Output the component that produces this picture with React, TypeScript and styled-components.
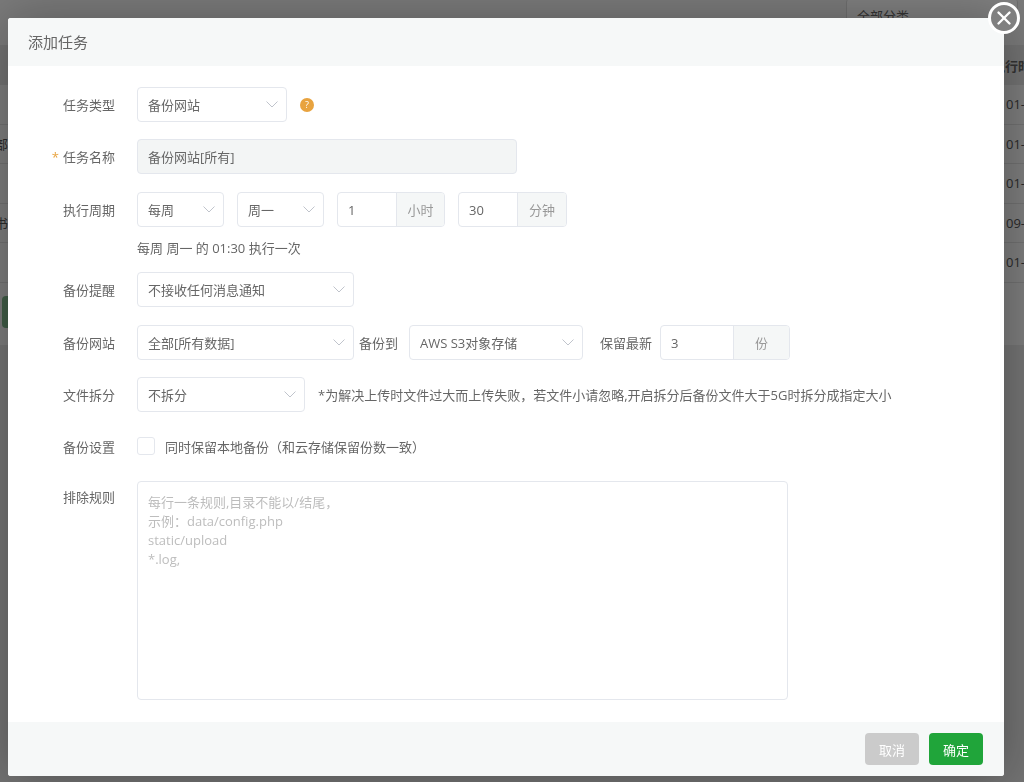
import React from "react";
import styled, { createGlobalStyle } from "styled-components";
import { X } from "lucide-react";

const Global = createGlobalStyle`
  html, body { margin: 0; padding: 0; height: 100%; overflow: hidden; }
  body { font-family: "Open Sans", "Noto Sans CJK SC", "Liberation Sans", sans-serif; font-size: 13px; color: #666; }
  * { box-sizing: border-box; }
`;

const Page = styled.div`
  width: 1024px;
  height: 782px;
  background: #e6e6e6;
  overflow: hidden;
`;
const PageTop = styled.div`
  height: 45px;
  display: flex;
  justify-content: flex-end;
  padding: 0 6px 0 0;
  background: #f5f5f5;
`;
const CategorySelect = styled.div`
  width: 172px;
  height: 32px;
  margin-top: -2px;
  padding: 7px 10px;
  border: 1px solid #ddd;
  border-radius: 4px;
  background: #fff;
`;
const PageTable = styled.div`
  background: #f8f8f8;
  height: 300px;
`;
const TableHead = styled.div`
  height: 40px;
  background: #e4e4e4;
  display: flex;
  justify-content: flex-end;
  align-items: center;
  font-weight: 600;
`;
const TableRow = styled.div`
  height: 39.5px;
  display: flex;
  justify-content: space-between;
  align-items: center;
  border-bottom: 1px solid #e0e0e0;
`;
const EdgeText = styled.span`
  display: block;
  width: 18px;
  overflow: hidden;
  white-space: nowrap;
  color: #555;
`;
const HeadText = styled(EdgeText)`
  width: 32px;
  color: #666;
`;
const LeftEdge = styled(EdgeText)`
  direction: rtl;
  width: 8px;
`;
const GreenButton = styled.div`
  width: 8px;
  height: 32px;
  margin: 13.5px 0 0 2px;
  background: #7fb88c;
  border-radius: 4px 0 0 4px;
`;

const Overlay = styled.div`
  position: fixed;
  inset: 0;
  background: rgba(0, 0, 0, 0.5);
`;
const Modal = styled.div`
  position: fixed;
  left: 8px;
  top: 18px;
  width: 996px;
  height: 758px;
  background: #fff;
  border-radius: 3px;
  box-shadow: 1px 1px 50px rgba(0, 0, 0, 0.3);
  display: flex;
  flex-direction: column;
`;
const Header = styled.div`
  height: 48px;
  flex: none;
  padding: 0 0 2px 20px;
  display: flex;
  align-items: center;
  font-size: 15px;
  color: #666;
  background: #f6f8f8;
  border-radius: 3px 3px 0 0;
`;
const CloseButton = styled.button`
  position: absolute;
  right: -16px;
  top: -16px;
  width: 32px;
  height: 32px;
  padding: 0;
  border: 3px solid #fff;
  border-radius: 50%;
  background: #808080;
  color: #fff;
  display: flex;
  align-items: center;
  justify-content: center;
`;
const Body = styled.div`
  flex: 1;
  padding: 21px 0 0;
`;
const Row = styled.div<{ $after?: number }>`
  display: flex;
  align-items: center;
  min-height: 35px;
  margin-bottom: ${(p) => p.$after ?? 17.5}px;
`;
const Label = styled.div<{ $required?: boolean }>`
  width: 107px;
  flex: none;
  text-align: right;
  margin-right: 22px;
  position: relative;
  &::before {
    content: ${(p) => (p.$required ? '"*"' : "none")};
    color: #e8a33f;
    margin-right: 4px;
  }
`;
const SelectBox = styled.div<{ $w: number }>`
  width: ${(p) => p.$w}px;
  height: 35px;
  flex: none;
  border: 1px solid #e4e7ed;
  border-radius: 4px;
  padding: 0 10px;
  display: flex;
  align-items: center;
  justify-content: space-between;
  color: #666;
`;
const Chevron = styled.svg`
  width: 12px;
  height: 7px;
  margin-right: -2px;
  flex: none;
  fill: none;
  stroke: #c0c4cc;
  stroke-width: 1;
`;
const NameInput = styled.div`
  width: 380px;
  height: 35px;
  border: 1px solid #e4e7ed;
  border-radius: 4px;
  padding: 0 10px;
  background: #f3f5f5;
  display: flex;
  align-items: center;
`;
const InputGroup = styled.div<{ $w: number; $addon: number }>`
  width: ${(p) => p.$w}px;
  height: 35px;
  flex: none;
  display: grid;
  grid-template-columns: 1fr ${(p) => p.$addon}px;
  border: 1px solid #e4e7ed;
  border-radius: 4px;
  overflow: hidden;
`;
const InputValue = styled.div`
  padding: 0 10px;
  display: flex;
  align-items: center;
`;
const Addon = styled.div`
  background: #f5f7f7;
  border-left: 1px solid #e4e7ed;
  color: #999;
  display: flex;
  align-items: center;
  justify-content: center;
`;
const HelpIcon = styled.span`
  width: 14px;
  height: 14px;
  margin-left: 13px;
  border-radius: 50%;
  background: #e8a33f;
  color: #fff;
  font-size: 9px;
  line-height: 14px;
  text-align: center;
`;
const Inline = styled.span<{ $l: number; $r: number }>`
  margin-left: ${(p) => p.$l}px;
  margin-right: ${(p) => p.$r}px;
  white-space: nowrap;
  flex: none;
`;
const Hint = styled.div`
  margin: -7px 0 14.5px 129px;
  height: 20px;
  line-height: 20px;
  color: #666;
`;
const CheckBox = styled.span`
  width: 18px;
  height: 18px;
  border: 1px solid #e4e7ed;
  border-radius: 3px;
  margin-right: 10px;
  flex: none;
`;
const TextAreaRow = styled(Row)`
  align-items: flex-start;
  margin: 0;
`;
const TextLabel = styled(Label)`
  padding-top: 6px;
`;
const TextArea = styled.div`
  width: 651px;
  height: 219px;
  border: 1px solid #e4e7ed;
  border-radius: 4px;
  padding: 10.5px 10px;
  line-height: 19.3px;
  color: #bdbdbd;
  white-space: pre-line;
`;
const Footer = styled.div`
  height: 54px;
  flex: none;
  background: #f6f8f8;
  border-radius: 0 0 3px 3px;
  display: flex;
  justify-content: flex-end;
  align-items: center;
  gap: 10px;
  padding-right: 21px;
`;
const Button = styled.button<{ $primary?: boolean }>`
  width: 54px;
  height: 32px;
  padding: 0;
  border: 0;
  border-radius: 4px;
  color: #fff;
  font: inherit;
  background: ${(p) => (p.$primary ? "#20a53a" : "#cbcbcb")};
`;

const Select = ({ w, children }: { w: number; children: React.ReactNode }) => (
  <SelectBox $w={w}>
    <span>{children}</span>
    <Chevron viewBox="0 0 12 7">
      <polyline points="0.5,0.5 6,6 11.5,0.5" />
    </Chevron>
  </SelectBox>
);

const Group = ({ w, addon, value, unit }: { w: number; addon: number; value: string; unit: string }) => (
  <InputGroup $w={w} $addon={addon}>
    <InputValue>{value}</InputValue>
    <Addon>{unit}</Addon>
  </InputGroup>
);

const rows: [string, string][] = [["", "01-"], ["部", "01-"], ["", "01-"], ["书", "09-"], ["", "01-"]];

export default function App() {
  return (
    <>
      <Global />
      <Page>
        <PageTop>
          <CategorySelect>全部分类</CategorySelect>
        </PageTop>
        <PageTable>
          <TableHead>
            <HeadText>执行时间</HeadText>
          </TableHead>
          {rows.map(([l, r], i) => (
            <TableRow key={i}>
              <LeftEdge>{l}</LeftEdge>
              <EdgeText>{r}</EdgeText>
            </TableRow>
          ))}
          <GreenButton />
        </PageTable>
      </Page>
      <Overlay />
      <Modal>
        <Header>添加任务</Header>
        <CloseButton aria-label="关闭">
          <X size={22} strokeWidth={2.6} />
        </CloseButton>
        <Body>
          <Row $after={17}>
            <Label>任务类型</Label>
            <Select w={150}>备份网站</Select>
            <HelpIcon>?</HelpIcon>
          </Row>
          <Row $after={18}>
            <Label $required>任务名称</Label>
            <NameInput>备份网站[所有]</NameInput>
          </Row>
          <Row>
            <Label>执行周期</Label>
            <Select w={87}>每周</Select>
            <Inline $l={13} $r={0}>
              <Select w={87}>周一</Select>
            </Inline>
            <Inline $l={13} $r={13}>
              <Group w={108} addon={48} value="1" unit="小时" />
            </Inline>
            <Group w={109} addon={49} value="30" unit="分钟" />
          </Row>
          <Hint>每周 周一 的 01:30 执行一次</Hint>
          <Row $after={18}>
            <Label>备份提醒</Label>
            <Select w={217}>不接收任何消息通知</Select>
          </Row>
          <Row $after={17}>
            <Label>备份网站</Label>
            <Select w={217}>全部[所有数据]</Select>
            <Inline $l={5} $r={11}>备份到</Inline>
            <Select w={174}>AWS S3对象存储</Select>
            <Inline $l={17} $r={8}>保留最新</Inline>
            <Group w={130} addon={56} value="3" unit="份" />
          </Row>
          <Row $after={16.5}>
            <Label>文件拆分</Label>
            <Select w={168}>不拆分</Select>
            <Inline $l={13} $r={0}>*为解决上传时文件过大而上传失败，若文件小请忽略,开启拆分后备份文件大于5G时拆分成指定大小</Inline>
          </Row>
          <Row>
            <Label>备份设置</Label>
            <CheckBox />
            <span>同时保留本地备份（和云存储保留份数一致）</span>
          </Row>
          <TextAreaRow>
            <TextLabel>排除规则</TextLabel>
            <TextArea>{"每行一条规则,目录不能以/结尾，\n示例：data/config.php\nstatic/upload\n*.log,"}</TextArea>
          </TextAreaRow>
        </Body>
        <Footer>
          <Button>取消</Button>
          <Button $primary>确定</Button>
        </Footer>
      </Modal>
    </>
  );
}
